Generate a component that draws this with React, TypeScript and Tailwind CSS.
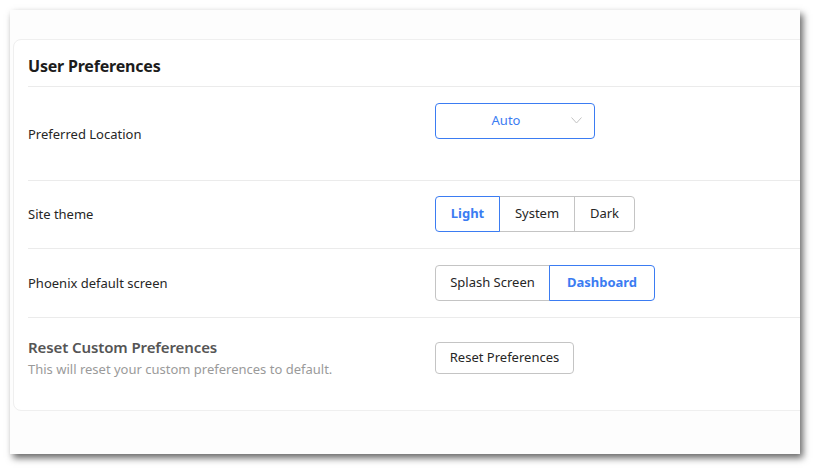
import React, { useState } from "react";

function Segmented({ options, value, onChange }: { options: { label: string; w: string }[]; value: string; onChange: (v: string) => void }) {
  return (
    <div className="flex h-[36px]">
      {options.map((o, i) => {
        const active = o.label === value;
        const first = i === 0;
        const last = i === options.length - 1;
        return (
          <button
            key={o.label}
            onClick={() => onChange(o.label)}
            className={
              "h-full flex items-center justify-center text-[13px] border " +
              o.w +
              (first ? " rounded-l-[4px]" : " -ml-px") +
              (last ? " rounded-r-[4px]" : "") +
              (active
                ? " relative z-10 border-[#3b7cf2] text-[#3b7cf2] font-bold"
                : " border-[#c4c4c4] text-[#262626]")
            }
          >
            {o.label}
          </button>
        );
      })}
    </div>
  );
}

function App() {
  const [theme, setTheme] = useState("Light");
  const [screen, setScreen] = useState("Dashboard");

  return (
    <div
      className="w-[816px] h-[470px] bg-white pt-[10px] pl-[10px]"
      style={{ fontFamily: '"Noto Sans", "Open Sans", sans-serif' }}
    >
      <div className="w-[790px] h-[444px] bg-[#fdfdfd] overflow-hidden shadow-[3px_4px_7px_rgba(0,0,0,0.6)]">
        <div className="mt-[29px] ml-[3px] w-[820px] bg-white border border-[#efefef] rounded-[8px] pl-[14px] pb-[1px]">
          <div className="h-[47px] flex items-center pt-[5px] border-b border-[#ebebeb]">
            <h2 className="text-[16px] font-bold text-[#1c1c1c] tracking-[-0.2px]">User Preferences</h2>
          </div>

          <div className="h-[94px] flex border-b border-[#ebebeb]">
            <div className="w-[407px] flex items-center pt-[3px]">
              <span className="text-[13px] text-[#262626]">Preferred Location</span>
            </div>
            <div className="pt-[16px]">
              <button className="w-[160px] h-[36px] rounded-[4px] border border-[#3b7cf2] relative flex items-center justify-center pr-[18px] text-[13px] text-[#3b7cf2]">
                Auto
                <svg className="absolute right-[12px] top-[13px]" width="11" height="7" viewBox="0 0 11 7" fill="none">
                  <path d="M0.5 0.5 L5.5 6 L10.5 0.5" stroke="#c2c2c2" strokeWidth="1" />
                </svg>
              </button>
            </div>
          </div>

          <div className="h-[68px] flex border-b border-[#ebebeb]">
            <div className="w-[407px] flex items-center">
              <span className="text-[13px] text-[#262626]">Site theme</span>
            </div>
            <div className="pt-[15px]">
              <Segmented
                value={theme}
                onChange={setTheme}
                options={[
                  { label: "Light", w: "w-[65px]" },
                  { label: "System", w: "w-[76px]" },
                  { label: "Dark", w: "w-[61px]" },
                ]}
              />
            </div>
          </div>

          <div className="h-[69px] flex border-b border-[#ebebeb]">
            <div className="w-[407px] flex items-center pt-[2px]">
              <span className="text-[13px] text-[#262626]">Phoenix default screen</span>
            </div>
            <div className="pt-[16px]">
              <Segmented
                value={screen}
                onChange={setScreen}
                options={[
                  { label: "Splash Screen", w: "w-[115px]" },
                  { label: "Dashboard", w: "w-[106px]" },
                ]}
              />
            </div>
          </div>

          <div className="flex pt-[19px] pb-[31px]">
            <div className="w-[407px] flex flex-col">
              <span className="text-[15px] leading-[20px] font-semibold text-[#555555] tracking-[-0.1px]">Reset Custom Preferences</span>
              <span className="text-[13px] leading-[18px] mt-[3px] text-[#9a9a9a]">
                This will reset your custom preferences to default.
              </span>
            </div>
            <div className="pt-[5px]">
              <button className="w-[139px] h-[32px] rounded-[4px] border border-[#c4c4c4] text-[13px] text-[#262626]">
                Reset Preferences
              </button>
            </div>
          </div>
        </div>
      </div>
    </div>
  );
}

export default App;
